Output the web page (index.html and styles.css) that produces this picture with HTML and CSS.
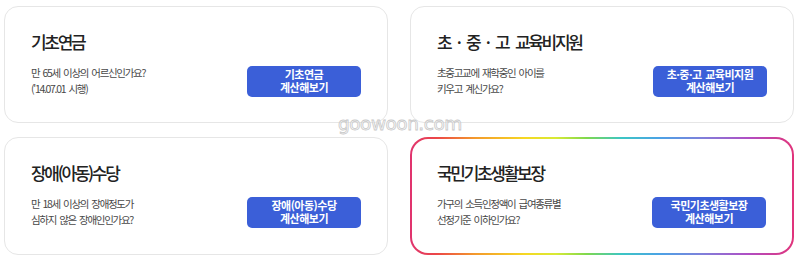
FILE: index.html
```html
<!DOCTYPE html>
<html lang="ko">
<head>
<meta charset="utf-8">
<title>계산기</title>
<link rel="stylesheet" href="styles.css">
</head>
<body>
<div class="page">
  <div class="grid">
    <section class="card">
      <h2 class="title">기초연금</h2>
      <div class="row">
        <p class="desc">만 65세 이상의 어르신인가요?<br>('14.07.01 시행)</p>
        <a class="btn" href="#">기초연금<br>계산해보기</a>
      </div>
    </section>
    <section class="card">
      <h2 class="title">초 · 중 · 고 교육비지원</h2>
      <div class="row">
        <p class="desc">초중고교에 재학중인 아이를<br>키우고 계신가요?</p>
        <a class="btn" href="#">초·중·고 교육비지원<br>계산해보기</a>
      </div>
    </section>
    <section class="card">
      <h2 class="title">장애(아동)수당</h2>
      <div class="row">
        <p class="desc">만 18세 이상의 장애정도가<br>심하지 않은 장애인인가요?</p>
        <a class="btn" href="#">장애(아동)수당<br>계산해보기</a>
      </div>
    </section>
    <section class="card card-active">
      <h2 class="title">국민기초생활보장</h2>
      <div class="row">
        <p class="desc">가구의 소득인정액이 급여종류별<br>선정기준 이하인가요?</p>
        <a class="btn" href="#">국민기초생활보장<br>계산해보기</a>
      </div>
    </section>
  </div>
  <div class="watermark">goowoon.com</div>
</div>
</body>
</html>
```

FILE: styles.css
```css
* { box-sizing: border-box; }
html, body { margin: 0; padding: 0; background: #fff; }
body {
  font-family: "Noto Sans CJK KR", "Noto Sans", sans-serif;
  color: #222;
}
.page { position: relative; width: 800px; height: 261px; }
.grid {
  display: grid;
  grid-template-columns: 384px 384px;
  grid-template-rows: 117px 118px;
  column-gap: 22px;
  row-gap: 14px;
  padding: 6px 0 0 4px;
}
.card {
  border: 1px solid #e6e6e6;
  border-radius: 14px;
  padding: 25px 26px 0 26px;
  background: #fff;
}
.card-active {
  border: 2px solid transparent;
  padding: 24px 26px 0 25px;
  background:
    linear-gradient(#fff, #fff) padding-box,
    linear-gradient(90deg, #e0336f 0%, #ec4747 7%, #f39a2c 17%, #f6d823 30%, #d8ea35 38%, #7fd84e 46%, #3cc6c4 55%, #4ba2e6 65%, #7f80db 76%, #b04ec4 88%, #e1337a 100%) border-box;
  border-radius: 18px;
}
.title {
  margin: 0;
  font-size: 17px;
  line-height: 20px;
  font-weight: 500;
  letter-spacing: -2.3px;
  word-spacing: 4px;
  color: #222;
}
.row {
  margin-top: 13px;
  display: flex;
  align-items: center;
  justify-content: space-between;
}
.desc {
  margin: 0;
  font-size: 10.5px;
  line-height: 16px;
  letter-spacing: -1.3px;
  word-spacing: 1.5px;
  color: #484848;
}
.btn {
  width: 114px;
  height: 31px;
  border-radius: 5px;
  background: #3b5fd8;
  color: #fff;
  text-decoration: none;
  font-size: 11px;
  line-height: 13px;
  font-weight: 700;
  letter-spacing: -0.5px;
  word-spacing: 1px;
  text-align: center;
  display: flex;
  align-items: center;
  justify-content: center;
}
.watermark {
  position: absolute;
  left: 338px;
  top: 114px;
  font-family: "DejaVu Sans", sans-serif;
  font-size: 18.5px;
  line-height: 20px;
  letter-spacing: -0.5px;
  color: rgba(255,255,255,0.6);
  -webkit-text-stroke: 0.8px #c8c8c8;
}
```
